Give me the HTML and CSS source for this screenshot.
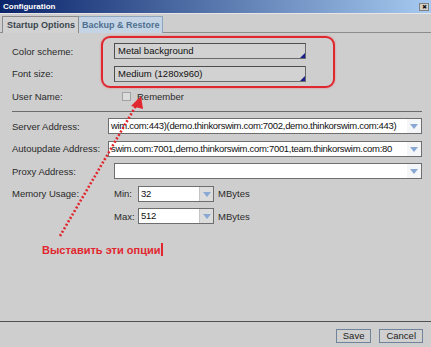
FILE: index.html
```html
<!DOCTYPE html>
<html lang="ru">

<head>
    <meta charset="UTF-8">
    <title>Configuration</title>
    <link rel="stylesheet" href="styles.css">
</head>

<body>
    <div class="window">
        <div class="titlebar">
            <span class="title">Configuration</span>
            <span class="close">&#x2716;</span>
        </div>

        <div class="tabs">
            <div class="tab">Startup Options</div>
            <div class="tab hover">Backup &amp; Restore</div>
        </div>

        <div class="panel">
            <div class="group">
                <div class="row">
                    <label>Color scheme:</label>
                    <div class="picker">Metal background</div>
                </div>
                <div class="row">
                    <label>Font size:</label>
                    <div class="picker">Medium (1280x960)</div>
                </div>
                <div class="row">
                    <label>User Name:</label>
                    <span class="check"></span>
                    <span class="check-label">Remember</span>
                </div>
            </div>

            <hr class="sep">

            <div class="group">
                <div class="row">
                    <label>Server Address:</label>
                    <div class="combo wide shifted">
                        <span class="value">wim.com:443)(demo.thinkorswim.com:7002,demo.thinkorswim.com:443)</span>
                        <span class="drop"></span>
                    </div>
                </div>
                <div class="row">
                    <label>Autoupdate Address:</label>
                    <div class="combo wide shifted">
                        <span class="value">swim.com:7001,demo.thinkorswim.com:7001,team.thinkorswim.com:80</span>
                        <span class="drop"></span>
                    </div>
                </div>
                <div class="row">
                    <label>Proxy Address:</label>
                    <div class="combo wide">
                        <span class="value"></span>
                        <span class="drop"></span>
                    </div>
                </div>
                <div class="row">
                    <label>Memory Usage:</label>
                    <span class="mem-label">Min:</span>
                    <div class="combo small">
                        <span class="value">32</span>
                        <span class="drop btn"></span>
                    </div>
                    <span class="unit">MBytes</span>
                </div>
                <div class="row">
                    <label></label>
                    <span class="mem-label">Max:</span>
                    <div class="combo small">
                        <span class="value">512</span>
                        <span class="drop btn"></span>
                    </div>
                    <span class="unit">MBytes</span>
                </div>
            </div>

            <div class="note">Выставить эти опции<span class="caret"></span></div>
        </div>

        <div class="footer">
            <button>Save</button>
            <button>Cancel</button>
        </div>

        <!-- annotation drawn over the dialog -->
        <div class="mark"></div>
        <svg class="arrow" width="431" height="347" viewBox="0 0 431 347">
            <line x1="60" y1="236" x2="137" y2="104" stroke="#e0262e" stroke-width="2.6" stroke-dasharray="2 2" />
            <polygon points="141,96 131,106 143,109" fill="#e0262e" />
        </svg>
    </div>
</body>

</html>
```

FILE: styles.css
```css
* {
    box-sizing: border-box;
}

body {
    margin: 0;
    font-family: "Liberation Sans", Arial, sans-serif;
    font-size: 9.5px;
    color: #2a2a2a;
    background: #cecece;
}

.window {
    position: relative;
    width: 431px;
    height: 347px;
    display: flex;
    flex-direction: column;
    background: #cecece;
    overflow: hidden;
}

.titlebar {
    height: 14px;
    display: flex;
    align-items: center;
    justify-content: space-between;
    padding: 0 2px 0 3px;
    background: linear-gradient(to right, #0a246a, #a6caf0);
    border-bottom: 1px solid #e6e6e6;
}

.title {
    color: #fff;
    font-weight: bold;
    font-size: 8px;
}

.close {
    width: 10px;
    height: 8px;
    display: flex;
    align-items: center;
    justify-content: center;
    background: #d4d0c8;
    border: 1px solid #808080;
    font-size: 6px;
    color: #111;
}

.tabs {
    display: flex;
    padding: 2px 0 0 2px;
    border-bottom: 1px solid #8c8c8c;
    height: 19px;
}

.tab {
    height: 17px;
    padding: 0 3px 0 4px;
    display: flex;
    align-items: center;
    font-weight: bold;
    font-size: 9px;
    color: #3b4650;
    border: 1px solid #8c8c8c;
    border-bottom: none;
    background: #d2d2d2;
}

.tab.hover {
    padding: 0 2px 0 3px;
    color: #4f6f90;
    background: #c4d4e4;
    border-color: #8ea6c0;
    border-left: none;
}

.panel {
    flex: 1;
    padding: 10px 9px 0 12px;
}

.group {
    display: flex;
    flex-direction: column;
    gap: 6.5px;
}

.row {
    display: flex;
    align-items: center;
    height: 16px;
}

.row label {
    width: 102px;
    flex-shrink: 0;
}

.picker {
    position: relative;
    width: 192px;
    height: 16px;
    padding-left: 3px;
    line-height: 14px;
    border: 1px solid #4e4e4e;
    border-right-color: #6a6a6a;
    border-bottom-color: #6a6a6a;
    background: #d2d2d2;
    color: #111;
}

.picker::after {
    content: "";
    position: absolute;
    right: 0;
    bottom: 0;
    border-left: 5px solid transparent;
    border-bottom: 5px solid #1a1f8c;
}

.check {
    width: 9px;
    height: 9px;
    margin-left: 8px;
    background: #dcdcdc;
    border: 1px solid #a2a2a2;
}

.check-label {
    margin-left: 6px;
}

.sep {
    margin: 7px 0 6px 0;
    border: none;
    border-top: 1px solid #6c6c6c;
}

.combo {
    display: flex;
    height: 16px;
    border: 1px solid #6e6e6e;
    background: #fff;
    color: #111;
    overflow: hidden;
}

.combo .value {
    flex: 1;
    padding-left: 2px;
    line-height: 14px;
    letter-spacing: -0.3px;
    white-space: nowrap;
    overflow: hidden;
}

.combo.wide {
    width: 308px;
}

.combo.shifted {
    width: 314px;
    margin-left: -6px;
}

.combo.small {
    width: 76px;
}

.drop {
    position: relative;
    width: 14px;
    flex-shrink: 0;
    background: #f4f6f8;
}

.drop.btn {
    background: #dcdcdc;
    border-left: 1px solid #c4c4c4;
}

.drop::after {
    content: "";
    position: absolute;
    left: 3px;
    top: 5px;
    border-left: 4px solid transparent;
    border-right: 4px solid transparent;
    border-top: 5px solid #8aa8d4;
}

.mem-label {
    width: 24px;
    flex-shrink: 0;
}

.unit {
    margin-left: 4px;
}

.note {
    display: flex;
    align-items: center;
    margin: 19px 0 0 30px;
    font-weight: bold;
    font-size: 11px;
    color: #e2262e;
}

.caret {
    width: 2px;
    height: 13px;
    margin-left: 1px;
    background: #e2262e;
}

.footer {
    height: 26px;
    border-top: 1px solid #505050;
    display: flex;
    justify-content: flex-end;
    align-items: flex-start;
    gap: 8px;
    padding: 7px 8px 0 0;
}

.footer button {
    height: 14px;
    padding: 0 6px;
    font-family: "Liberation Sans", Arial, sans-serif;
    font-size: 9.5px;
    color: #222;
    background: #d0d0d0;
    border: 1px solid #6f839a;
    line-height: 12px;
}

.mark {
    position: absolute;
    left: 101px;
    top: 36px;
    width: 234px;
    height: 52px;
    border: 2px solid #e0262e;
    border-radius: 9px;
    box-shadow: 0 0 2px rgba(240, 60, 60, 0.6);
    pointer-events: none;
}

.arrow {
    position: absolute;
    left: 0;
    top: 0;
    pointer-events: none;
}
```
